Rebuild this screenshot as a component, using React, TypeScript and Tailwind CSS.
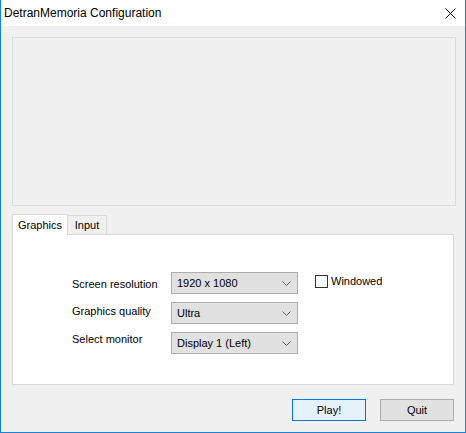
import React, { useState } from 'react';

const FONT = "font-['Segoe_UI','Liberation_Sans',sans-serif]";

function Chevron() {
  return (
    <svg width="9" height="5" viewBox="0 0 9 5" className="shrink-0">
      <path d="M0.5 0.5 L4.5 4.5 L8.5 0.5" fill="none" stroke="#606060" strokeWidth="1" />
    </svg>
  );
}

function Select({ value }: { value: string }) {
  return (
    <div className="h-[22px] w-[127px] border border-[#adadad] bg-[#e1e1e1] flex items-center justify-between pl-[5px] pr-[6px] text-[11px] text-black">
      <span>{value}</span>
      <Chevron />
    </div>
  );
}

export default function App() {
  const [tab, setTab] = useState<'graphics' | 'input'>('graphics');
  const [windowed, setWindowed] = useState(false);

  return (
    <div className={`w-[466px] h-[433px] flex flex-col border-x border-b border-[#1883d7] bg-[#f0f0f0] ${FONT}`}>
      {/* Title bar */}
      <div className="h-[26px] bg-white flex items-center justify-between pl-[3px] pr-[9px] shrink-0">
        <span className="text-[12px] text-black">DetranMemoria Configuration</span>
        <svg width="11" height="11" viewBox="0 0 11 11">
          <path d="M0.5 0.5 L10.5 10.5 M10.5 0.5 L0.5 10.5" stroke="#000" strokeWidth="1" />
        </svg>
      </div>

      {/* Client area */}
      <div className="flex-1 flex flex-col pl-[11px] pr-[9px] pt-[11px]">
        {/* preview */}
        <div className="h-[169px] w-[444px] border border-[#d9d9d9] bg-[#f0f0f0]" />

        {/* tabs */}
        <div className="mt-[7px] w-[442px] flex flex-col">
          <div className="flex items-end h-[21px] text-[11px] text-black">
            <button
              onClick={() => setTab('graphics')}
              className={`w-[56px] border-x border-t border-[#d9d9d9] ${tab === 'graphics' ? 'bg-white h-[21px] -mb-px relative z-10' : 'bg-[#f0f0f0] h-[19px]'}`}
            >
              Graphics
            </button>
            <button
              onClick={() => setTab('input')}
              className={`w-[39px] border-r border-t border-[#d9d9d9] ${tab === 'input' ? 'bg-white h-[21px] -mb-px relative z-10' : 'bg-[#f0f0f0] h-[19px]'}`}
            >
              Input
            </button>
          </div>
          <div className="h-[151px] border border-[#d9d9d9] bg-white pt-[37px] pl-[59px]">
            {tab === 'graphics' && (
              <div className="grid grid-cols-[99px_127px_auto] gap-y-[8px] text-[11px] text-black">
                <span className="mt-[4px]">Screen resolution</span>
                <Select value="1920 x 1080" />
                <label className="ml-[17px] mt-[1px] flex items-center gap-[3px] self-start cursor-default">
                  <span
                    onClick={() => setWindowed(!windowed)}
                    className="w-[13px] h-[13px] border border-[#333] bg-white flex items-center justify-center text-[10px] leading-none"
                  >
                    {windowed ? '✓' : ''}
                  </span>
                  <span>Windowed</span>
                </label>
                <span className="mt-[1px]">Graphics quality</span>
                <Select value="Ultra" />
                <span />
                <span className="-mt-[1px]">Select monitor</span>
                <Select value="Display 1 (Left)" />
                <span />
              </div>
            )}
          </div>
        </div>

        {/* buttons */}
        <div className="mt-[14px] w-[442px] flex justify-end gap-[14px] text-[11px] text-black">
          <button className="w-[74px] h-[22px] border border-[#0078d7] bg-[#e5f1fb]">Play!</button>
          <button className="w-[74px] h-[22px] border border-[#adadad] bg-[#e1e1e1]">Quit</button>
        </div>
      </div>
    </div>
  );
}
